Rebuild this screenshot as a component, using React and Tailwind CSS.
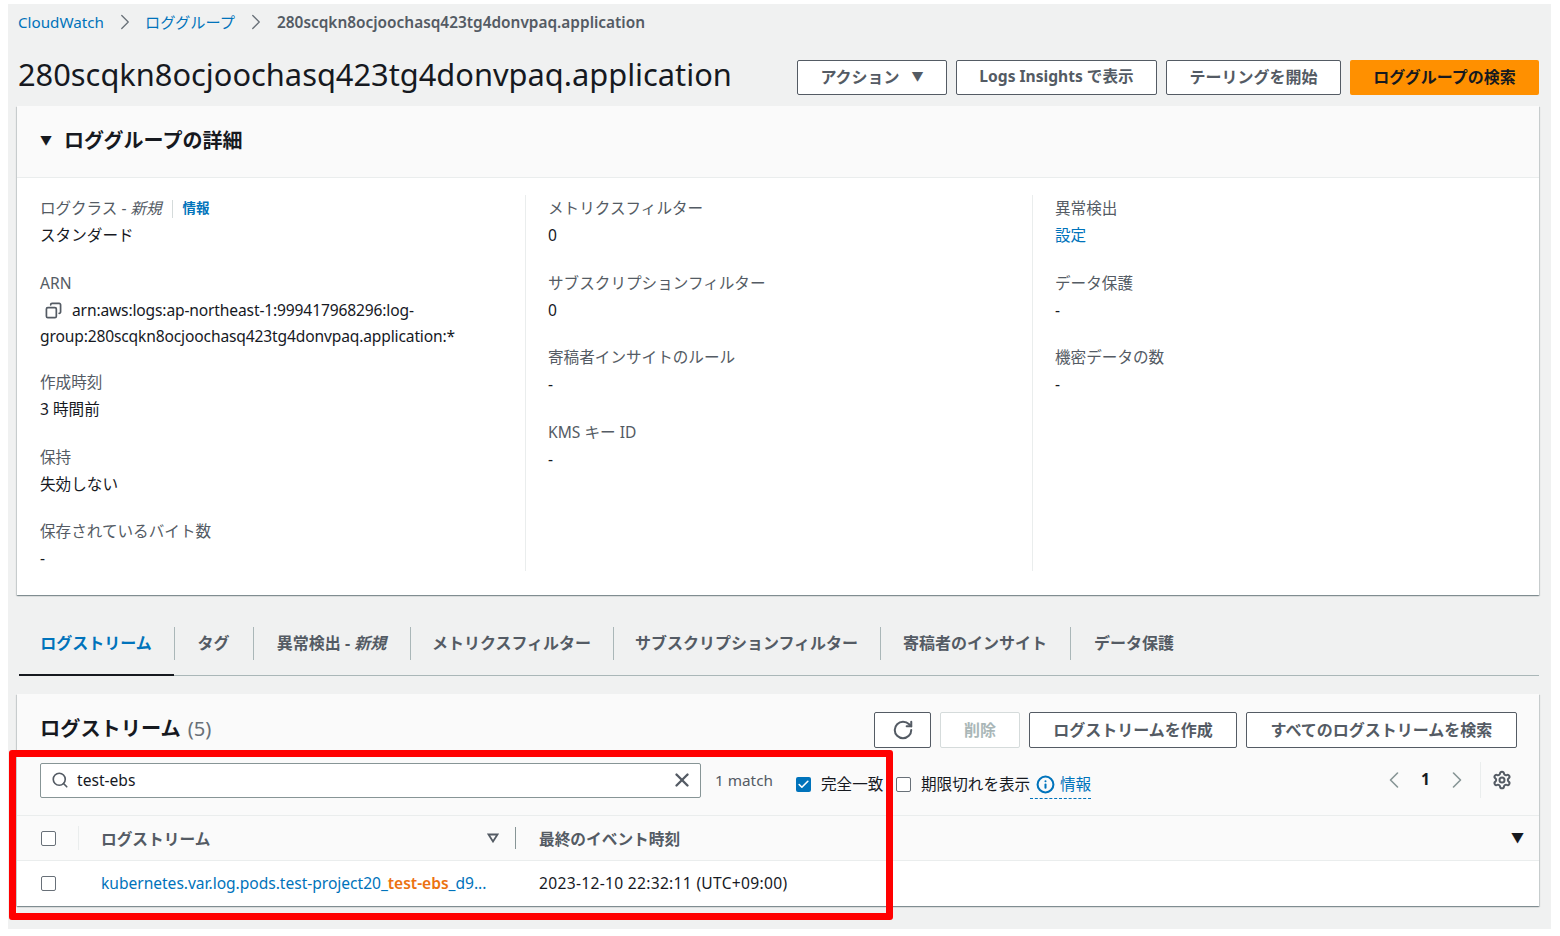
import { ChevronRight, ChevronLeft, Copy, RotateCw, Search, X, Settings, Check, Info } from "lucide-react";

const font = "font-['Noto_Sans','Noto_Sans_CJK_JP',sans-serif]";

const Field = ({ label, children, className = "" }) => (
  <div className={`mb-[20.7px] ${className}`}>
    <div className="text-[15.6px] leading-[27px] text-[#545b64]">{label}</div>
    <div className="text-[15.6px] leading-[27px] text-[#16191f]">{children}</div>
  </div>
);

const TopButton = ({ children, className = "" }) => (
  <button className={`h-[35px] pb-[1px] border border-[#545b64] rounded-[2px] bg-white text-[16px] font-bold text-[#545b64] flex items-center justify-center ${className}`}>
    {children}
  </button>
);

const Tab = ({ children, className = "", divider = true }) => (
  <div className={`h-[33px] pb-[1px] pr-[1px] flex items-center justify-center text-[16px] font-bold text-[#545b64] ${divider ? "border-r border-[#aab7b8]" : ""} ${className}`}>
    {children}
  </div>
);

const Box = ({ checked }) =>
  checked ? (
    <span className="w-[15px] h-[15px] rounded-[2px] bg-[#0073bb] flex items-center justify-center shrink-0">
      <Check size={13} strokeWidth={3} className="text-white" />
    </span>
  ) : (
    <span className="w-[15px] h-[15px] rounded-[2px] border border-[#687078] bg-white shrink-0" />
  );

export default function App() {
  return (
    <div className={`w-[1560px] h-[936px] bg-white pt-[4px] pl-[8px] overflow-hidden ${font}`}>
      <div className="relative w-[1543px] h-[925px] bg-[#f0f1f1] pl-[9px]">
        {/* breadcrumbs */}
        <div className="h-[36px] flex items-center text-[15.2px] pl-[1px]">
          <a className="text-[#0073bb] w-[96px]">CloudWatch</a>
          <ChevronRight size={26} strokeWidth={1.2} className="text-[#687078] mr-[7px] -ml-[2px]" />
          <a className="text-[#0073bb] w-[103px]">ロググループ</a>
          <ChevronRight size={26} strokeWidth={1.2} className="text-[#687078] mr-[8px] -ml-[5px]" />
          <span className="font-semibold text-[#545b64] text-[15.4px] pt-[1px]">280scqkn8ocjoochasq423tg4donvpaq.application</span>
        </div>

        {/* heading */}
        <div className="flex items-center h-[35px] mt-[20px] w-[1522px]">
          <h1 className="text-[30.8px] leading-[35px] text-[#16191f] flex-1 pl-[1px] mb-[6px] whitespace-nowrap">280scqkn8ocjoochasq423tg4donvpaq.application</h1>
          <div className="flex gap-[9px]">
            <TopButton className="w-[150px] gap-[12px]">アクション <span className="text-[12px] text-[#545b64]">▼</span></TopButton>
            <TopButton className="w-[201px] !text-[15.6px]">Logs Insights で表示</TopButton>
            <TopButton className="w-[175px]">テーリングを開始</TopButton>
            <button className="h-[35px] pb-[1px] w-[189px] rounded-[2px] bg-[#ff9000] text-[16px] font-bold text-[#16191f]">ロググループの検索</button>
          </div>
        </div>

        {/* details panel */}
        <section className="w-[1522px] h-[489px] mt-[11px] bg-white shadow-[0_1px_1px_rgba(0,28,36,0.3),1px_1px_1px_rgba(0,28,36,0.12),-1px_1px_1px_rgba(0,28,36,0.12)]">
          <div className="h-[72px] pb-[2px] bg-[#fafafa] border-b border-[#eaeded] flex items-center pl-[23px] gap-[12px]">
            <span className="text-[12px] text-[#16191f]">▼</span>
            <h2 className="text-[20px] font-bold text-[#16191f]">ロググループの詳細</h2>
          </div>
          <div className="grid grid-cols-[509px_507px_1fr] pt-[17px]">
            <div className="h-[376px] pl-[23px] border-r border-[#eaeded]">
              <div className="mb-[21px]">
                <div className="text-[15.6px] leading-[27px] text-[#545b64] flex items-center">
                  ログクラス - <i className="ml-[4px]">新規</i>
                  <span className="ml-[10px] h-[18px] border-l border-[#d5dbdb]" />
                  <a className="ml-[10px] text-[13.5px] font-bold text-[#0073bb]">情報</a>
                </div>
                <div className="text-[15.6px] leading-[27px] text-[#16191f]">スタンダード</div>
              </div>
              <div className="mb-[20px] w-[470px]">
                <div className="text-[15.6px] leading-[27px] text-[#545b64]">ARN</div>
                <div className="text-[15.6px] leading-[26px] text-[#16191f] tracking-[-0.15px]">
                  <Copy size={17} strokeWidth={2.4} className="inline text-[#545b64] ml-[5px] mr-[10px] -scale-x-100 -translate-y-[1px]" />
                  arn:aws:logs:ap-northeast-1:999417968296:log-
                  <br />
                  group:280scqkn8ocjoochasq423tg4donvpaq.application:*
                </div>
              </div>
              <Field label="作成時刻">3 時間前</Field>
              <Field label="保持">失効しない</Field>
              <Field label="保存されているバイト数">-</Field>
            </div>
            <div className="h-[376px] pl-[22px] border-r border-[#eaeded]">
              <Field label="メトリクスフィルター">0</Field>
              <Field label="サブスクリプションフィルター">0</Field>
              <Field label="寄稿者インサイトのルール">-</Field>
              <Field label="KMS キー ID">-</Field>
            </div>
            <div className="pl-[22px]">
              <Field label="異常検出"><a className="text-[#0073bb]">設定</a></Field>
              <Field label="データ保護">-</Field>
              <Field label="機密データの数">-</Field>
            </div>
          </div>
        </section>

        {/* tabs */}
        <div className="w-[1520px] ml-[2px] mt-[32px] h-[49px] border-b border-[#aab7b8] flex relative">
          <Tab className="w-[156px] !text-[#0073bb]">ログストリーム</Tab>
          <Tab className="w-[79px]">タグ</Tab>
          <Tab className="w-[157px]">異常検出 - <i className="ml-[4px]">新規</i></Tab>
          <Tab className="w-[203px]">メトリクスフィルター</Tab>
          <Tab className="w-[267px]">サブスクリプションフィルター</Tab>
          <Tab className="w-[190px]">寄稿者のインサイト</Tab>
          <Tab className="w-[127px]" divider={false}>データ保護</Tab>
          <div className="absolute left-0 -bottom-[1px] w-[155px] h-[2px] bg-[#16191f]" />
        </div>

        {/* log streams panel */}
        <section className="w-[1522px] h-[212px] mt-[18px] bg-white shadow-[0_1px_1px_rgba(0,28,36,0.3),1px_1px_1px_rgba(0,28,36,0.12),-1px_1px_1px_rgba(0,28,36,0.12)]">
          <div className="h-[122px] bg-[#fafafa] border-b border-[#eaeded] pl-[23px] pr-[22px] pt-[18px]">
            <div className="flex items-center h-[36px]">
              <h2 className="text-[20.2px] font-bold text-[#16191f] flex-1 pb-[3px] whitespace-nowrap">ログストリーム<span className="ml-[7px] font-normal text-[#687078]">(5)</span></h2>
              <div className="flex gap-[9px]">
                <button className="w-[57px] h-[36px] border border-[#545b64] rounded-[2px] bg-white flex items-center justify-center">
                  <RotateCw size={22} strokeWidth={2.2} className="text-[#545b64]" />
                </button>
                <button className="w-[80px] h-[36px] border border-[#d5dbdb] rounded-[2px] bg-white text-[16px] font-bold text-[#aab7b8]">削除</button>
                <TopButton className="!h-[36px] w-[208px]">ログストリームを作成</TopButton>
                <TopButton className="!h-[36px] w-[271px]">すべてのログストリームを検索</TopButton>
              </div>
            </div>
            <div className="flex items-center h-[36px] mt-[14px]">
              <div className="w-[661px] h-[35px] border border-[#879596] rounded-[2px] bg-white flex items-center pl-[10px] pr-[7px] gap-[8px] text-[15.6px] text-[#16191f]">
                <Search size={18} strokeWidth={2.2} className="text-[#545b64]" />
                <span className="flex-1 pt-[2px]">test-ebs</span>
                <X size={22} strokeWidth={2.6} className="text-[#545b64]" />
              </div>
              <span className="ml-[14px] w-[81px] text-[15.3px] text-[#545b64]">1 match</span>
              <div className="flex items-center mt-[10px]">
                <Box checked />
                <span className="ml-[10px] w-[75px] text-[15.6px] text-[#16191f] whitespace-nowrap">完全一致</span>
                <Box />
                <span className="ml-[10px] w-[116px] text-[15.6px] text-[#16191f] whitespace-nowrap">期限切れを表示</span>
                <span className="flex items-center gap-[5px] relative -ml-[1px]">
                  <Info size={19} strokeWidth={2.6} className="text-[#0073bb]" />
                  <a className="text-[15.6px] text-[#0073bb]">情報</a>
                  <span className="absolute -left-[6px] right-0 -bottom-[2px] border-b border-dashed border-[#0073bb]" />
                </span>
              </div>
              <div className="ml-auto flex items-center h-[36px]">
                <ChevronLeft size={28} strokeWidth={1.4} className="text-[#879596]" />
                <span className="mx-[13px] text-[15.6px] font-bold text-[#16191f]">1</span>
                <ChevronRight size={28} strokeWidth={1.4} className="text-[#879596]" />
                <span className="ml-[9px] h-[36px] border-l border-[#eaeded]" />
                <Settings size={20} strokeWidth={2.4} className="ml-[11px] mr-[5px] text-[#545b64]" />
              </div>
            </div>
          </div>
          <div className="h-[45px] bg-[#fafafa] border-b border-[#eaeded] flex items-center text-[15.7px] font-bold text-[#545b64]">
            <div className="w-[62px] h-[24px] pl-[24px] border-r border-[#eaeded] flex items-center"><Box /></div>
            <div className="w-[437px] h-[22px] pl-[22px] pr-[16px] border-r border-[#879596] flex items-center justify-between">
              <span className="pt-[3px]">ログストリーム</span>
              <svg width="12" height="10" viewBox="0 0 12 10" fill="none" stroke="#545b64" strokeWidth="1.8"><path d="M1.5 1.5h9L6 8.5z" /></svg>
            </div>
            <div className="pl-[23px] pt-[3px] flex-1">最終のイベント時刻</div>
            <span className="text-[13px] text-[#16191f] mr-[15px]">▼</span>
          </div>
          <div className="h-[45px] flex items-center text-[15.6px]">
            <div className="w-[62px] pl-[24px] flex items-center"><Box /></div>
            <div className="w-[437px] pl-[22px] text-[#0073bb] tracking-[-0.03px] whitespace-nowrap">
              kubernetes.var.log.pods.test-project20_<span className="text-[#ec7211] font-semibold">test-ebs</span>_d9...
            </div>
            <div className="pl-[23px] text-[#16191f] tracking-[0.3px]">2023-12-10 22:32:11 (UTC+09:00)</div>
          </div>
        </section>

        {/* annotation */}
        <div className="absolute left-[1px] top-[746px] w-[884px] h-[170px] border-[7px] border-[#ff0000] rounded-[3px]" />
      </div>
    </div>
  );
}
